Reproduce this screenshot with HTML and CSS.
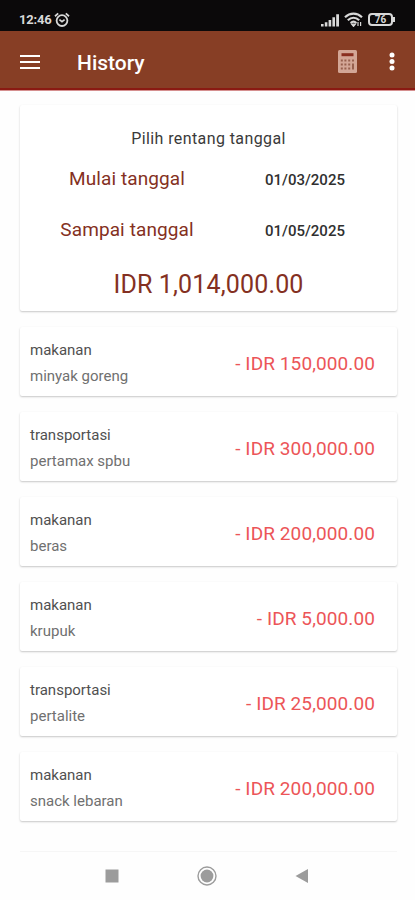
FILE: index.html
```html
<!DOCTYPE html>
<html lang="id">
<head>
    <meta charset="UTF-8">
    <meta name="viewport" content="width=device-width, initial-scale=1.0">
    <title>History</title>
    <link rel="stylesheet" href="styles.css">
</head>
<body>
    <div class="status-bar">
        <span class="time">12:46</span>
        <svg class="alarm" width="16" height="16" viewBox="0 0 16 16" fill="none" stroke="#d8d8d8" stroke-width="1.8">
            <circle cx="8" cy="8.6" r="5.4"/>
            <path d="M1 4.2 4.2 1.4M15 4.2 11.8 1.4M5.4 7.6 8 9.6 10.6 7.6"/>
        </svg>
        <svg class="signal" width="20" height="14" viewBox="0 0 20 14" fill="#d8d8d8">
            <path d="M1 11h2.6v2.5H1zM4.8 9.3h2.6v4.2H4.8zM8.6 7h2.6v6.5H8.6zM12.4 4.2H15v9.3h-2.6zM16.2 1.2h2.8v12.3h-2.8z"/>
        </svg>
        <svg class="wifi" width="19" height="15" viewBox="0 0 19 15" fill="none" stroke="#d8d8d8" stroke-width="2.2">
            <path d="M1 5.2C6 .4 13 .4 18 5.2M3.8 8.2c3.4-3.2 8-3.2 11.4 0M6.6 11c1.8-1.6 4-1.6 5.8 0"/>
            <path d="M7.6 12.2h3.8L9.5 14.4zM14 10v4M16.6 10v4" stroke-width="1.2" fill="#d8d8d8"/>
        </svg>
        <div class="battery"><span>76</span></div>
    </div>

    <div class="toolbar">
        <svg class="menu" width="20" height="14" viewBox="0 0 20 14" fill="#fff">
            <path d="M0 0h20v2H0zM0 6h20v2H0zM0 12h20v2H0z"/>
        </svg>
        <h1>History</h1>
        <svg class="calculator" width="19" height="23" viewBox="0 0 19 23">
            <rect width="19" height="23" rx="1.5" fill="#d3a696"/>
            <path d="M3.5 3.2h12v3h-12z" fill="#8a2f20"/>
            <path d="M2.8 9.4h2v2h-2zM6.4 9.4h2v2h-2zM10.2 9.4h2v2h-2zM14 9.4h2v2h-2zM2.8 13.4h2v2h-2zM6.4 13.4h2v2h-2zM10.2 13.4h2v2h-2zM14 13.4h2v6h-2zM2.8 17.4h2v2h-2zM6.4 17.4h2v2h-2zM10.2 17.4h2v2h-2z" fill="#97604e"/>
        </svg>
        <svg class="more" width="6" height="19" viewBox="0 0 6 19" fill="#fff">
            <circle cx="3" cy="3" r="2.5"/>
            <circle cx="3" cy="9.5" r="2.5"/>
            <circle cx="3" cy="16" r="2.5"/>
        </svg>
    </div>

    <div class="content">
        <div class="card summary">
            <p class="summary-title">Pilih rentang tanggal</p>
            <div class="date-row">
                <span class="date-label">Mulai tanggal</span>
                <span class="date">01/03/2025</span>
            </div>
            <div class="date-row">
                <span class="date-label">Sampai tanggal</span>
                <span class="date">01/05/2025</span>
            </div>
            <p class="total">IDR 1,014,000.00</p>
        </div>

        <div class="card item">
            <div>
                <p class="category">makanan</p>
                <p class="note">minyak goreng</p>
            </div>
            <span class="amount">- IDR 150,000.00</span>
        </div>
        <div class="card item">
            <div>
                <p class="category">transportasi</p>
                <p class="note">pertamax spbu</p>
            </div>
            <span class="amount">- IDR 300,000.00</span>
        </div>
        <div class="card item">
            <div>
                <p class="category">makanan</p>
                <p class="note">beras</p>
            </div>
            <span class="amount">- IDR 200,000.00</span>
        </div>
        <div class="card item">
            <div>
                <p class="category">makanan</p>
                <p class="note">krupuk</p>
            </div>
            <span class="amount">- IDR 5,000.00</span>
        </div>
        <div class="card item">
            <div>
                <p class="category">transportasi</p>
                <p class="note">pertalite</p>
            </div>
            <span class="amount">- IDR 25,000.00</span>
        </div>
        <div class="card item">
            <div>
                <p class="category">makanan</p>
                <p class="note">snack lebaran</p>
            </div>
            <span class="amount">- IDR 200,000.00</span>
        </div>
    </div>

    <div class="nav-bar">
        <svg width="20" height="20" viewBox="0 0 20 20"><path d="M3.5 3.5h13v13h-13z" fill="#9c9c9c"/></svg>
        <svg width="20" height="20" viewBox="0 0 20 20">
            <circle cx="10" cy="10" r="9" fill="none" stroke="#9c9c9c" stroke-width="1.4"/>
            <circle cx="10" cy="10" r="6.4" fill="#9c9c9c"/>
        </svg>
        <svg width="20" height="20" viewBox="0 0 20 20"><path d="M3.5 10 16 3v14z" fill="#9c9c9c"/></svg>
    </div>
</body>
</html>
```
FILE: styles.css
```css
* {
    box-sizing: border-box;
}
body {
    margin: 0;
    height: 900px;
    display: flex;
    flex-direction: column;
    overflow: hidden;
    font-family: Roboto, sans-serif;
    background: #fefefe;
}
h1, p {
    margin: 0;
}
.status-bar {
    height: 31px;
    padding: 8px 20px 0 19px;
    display: flex;
    align-items: center;
    background: #0b090a;
    color: #d8d8d8;
}
.time {
    font-size: 13px;
    font-weight: 700;
    letter-spacing: -0.2px;
}
.alarm {
    margin-left: 2px;
}
.signal {
    margin-left: auto;
}
.wifi {
    margin-left: 4px;
}
.battery {
    position: relative;
    width: 25px;
    height: 13px;
    margin: 0 2px 0 5px;
    border: 2px solid #d8d8d8;
    border-radius: 4px;
    display: flex;
    align-items: center;
    justify-content: center;
    font-size: 10px;
    font-weight: 700;
}
.battery::after {
    content: "";
    position: absolute;
    right: -4px;
    top: 2px;
    width: 2px;
    height: 5px;
    background: #d8d8d8;
}
.toolbar {
    height: 60px;
    padding: 2px 20px 0;
    display: flex;
    align-items: center;
    background: #873e25;
    border-bottom: 1px solid #d58f8f;
    box-shadow: inset 0 -2px #8a1a12;
}
.toolbar h1 {
    margin: 2px 0 0 37px;
    font-size: 21px;
    font-weight: 500;
    color: #fff;
}
.calculator {
    margin-left: auto;
}
.more {
    margin-left: 32px;
}
.content {
    height: 760px;
    padding: 14px 18px 0 20px;
    display: flex;
    flex-direction: column;
    gap: 16px;
}
.card {
    flex: none;
    background: #fff;
    border-radius: 2px;
    box-shadow: 0 1px 2px rgba(0, 0, 0, 0.22);
}
.summary {
    height: 206px;
    padding-top: 22px;
    color: #3a3a3a;
    text-align: center;
}
.summary-title {
    margin-bottom: 2px;
    font-size: 16px;
    line-height: 24px;
    letter-spacing: 0.4px;
}
.date-row {
    height: 51px;
    padding: 0 3px 0 18px;
    display: grid;
    grid-template-columns: 1fr 1fr;
    align-items: center;
}
.date-label {
    font-size: 19px;
    letter-spacing: 0.1px;
    color: #843022;
}
.date {
    padding-top: 2px;
    font-size: 15px;
    font-weight: 500;
    color: #303030;
}
.total {
    margin-top: 15px;
    font-size: 25px;
    line-height: 30px;
    letter-spacing: 0.15px;
    color: #843022;
}
.item {
    height: 69px;
    padding: 3px 22px 0 10px;
    display: flex;
    align-items: center;
    justify-content: space-between;
}
.category, .note {
    font-size: 15px;
    line-height: 26px;
}
.category {
    color: #505050;
}
.note {
    color: #707070;
}
.amount {
    font-size: 19px;
    letter-spacing: 0.1px;
    color: #ec5558;
}
.nav-bar {
    flex: 1;
    margin: 0 18px 0 20px;
    padding: 0 85px 0 82px;
    display: flex;
    align-items: center;
    justify-content: space-between;
    border-top: 1px solid #f6f6f6;
}
```
